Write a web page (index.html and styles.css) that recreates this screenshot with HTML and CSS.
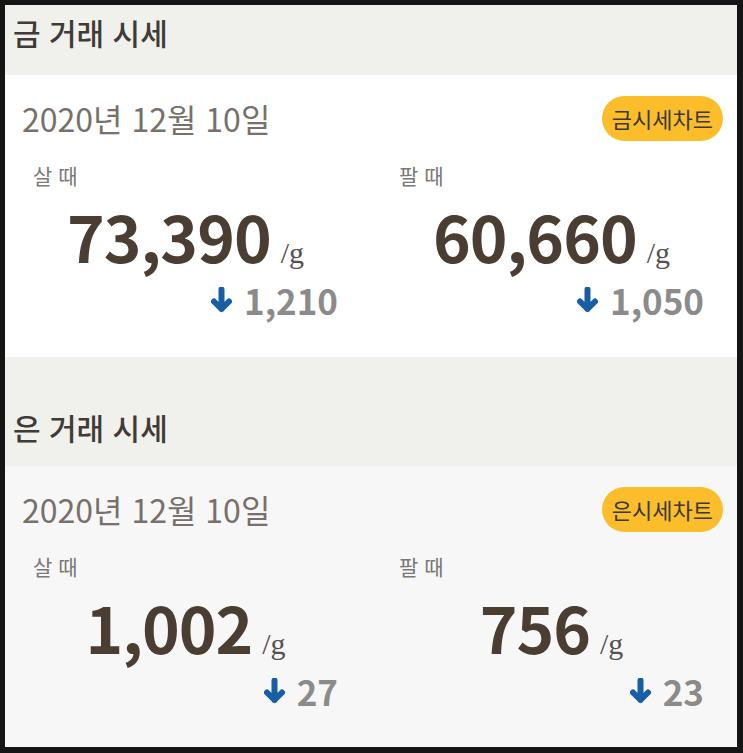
FILE: index.html
```html
<!DOCTYPE html>
<html lang="ko">
<head>
<meta charset="utf-8">
<link rel="stylesheet" href="styles.css">
</head>
<body>
<div class="frame">
  <div class="wrap">
    <h2 class="sec-title">금 거래 시세</h2>
    <section class="card card-gold">
      <div class="card-top">
        <div class="date">2020년 12월 10일</div>
        <a class="badge">금시세차트</a>
      </div>
      <div class="cols">
        <div class="col">
          <div class="label">살 때</div>
          <div class="price"><span class="num">73,390</span><span class="unit">/g</span></div>
          <div class="change"><svg class="arrow" viewBox="0 0 21 26"><path d="M10.5 2.5 V22 M3 14.5 L10.5 22 L18 14.5" /></svg><span>1,210</span></div>
        </div>
        <div class="col">
          <div class="label">팔 때</div>
          <div class="price"><span class="num">60,660</span><span class="unit">/g</span></div>
          <div class="change"><svg class="arrow" viewBox="0 0 21 26"><path d="M10.5 2.5 V22 M3 14.5 L10.5 22 L18 14.5" /></svg><span>1,050</span></div>
        </div>
      </div>
    </section>
    <h2 class="sec-title sec-second">은 거래 시세</h2>
    <section class="card card-silver">
      <div class="card-top">
        <div class="date">2020년 12월 10일</div>
        <a class="badge">은시세차트</a>
      </div>
      <div class="cols">
        <div class="col">
          <div class="label">살 때</div>
          <div class="price"><span class="num">1,002</span><span class="unit">/g</span></div>
          <div class="change"><svg class="arrow" viewBox="0 0 21 26"><path d="M10.5 2.5 V22 M3 14.5 L10.5 22 L18 14.5" /></svg><span>27</span></div>
        </div>
        <div class="col">
          <div class="label">팔 때</div>
          <div class="price"><span class="num">756</span><span class="unit">/g</span></div>
          <div class="change"><svg class="arrow" viewBox="0 0 21 26"><path d="M10.5 2.5 V22 M3 14.5 L10.5 22 L18 14.5" /></svg><span>23</span></div>
        </div>
      </div>
    </section>
  </div>
</div>
</body>
</html>
```

FILE: styles.css
```css
html, body {
  margin: 0;
  padding: 0;
  background: #151515;
}
body {
  font-family: "Noto Sans CJK KR", "Noto Sans", sans-serif;
}
.frame {
  padding: 5px 6px 6px 5px;
  height: 753px;
  box-sizing: border-box;
}
.wrap {
  background: #f0f0ec;
  height: 100%;
  display: flex;
  flex-direction: column;
}
.sec-title {
  margin: 0;
  height: 70px;
  box-sizing: border-box;
  padding: 9px 0 0 8px;
  font-size: 30px;
  line-height: 36px;
  font-weight: 500;
  color: #3f3b37;
}
.sec-second {
  margin-top: 43px;
  height: 66px;
}
.card {
  background: #ffffff;
  height: 282px;
  box-sizing: border-box;
  padding-top: 21px;
}
.card-silver {
  background: #f7f7f7;
  flex: 1;
  height: auto;
}
.card-top {
  display: flex;
  justify-content: space-between;
  align-items: center;
  padding: 0 14px 0 17px;
}
.date {
  font-size: 32px;
  line-height: 45px;
  color: #77706b;
  font-weight: 400;
}
.badge {
  display: block;
  height: 45px;
  line-height: 45px;
  padding: 0 10px;
  border-radius: 23px;
  background: #fbbd29;
  color: #3b3a31;
  font-size: 22px;
}
.cols {
  display: grid;
  grid-template-columns: 1fr 1fr;
}
.col {
  display: flex;
  flex-direction: column;
  padding: 0 33px 0 28px;
}
.label {
  margin-top: 21px;
  font-size: 21px;
  line-height: 26px;
  color: #7a7878;
}
.price {
  display: flex;
  justify-content: center;
  align-items: baseline;
  margin-top: 15px;
  height: 64px;
}
.num {
  font-size: 64px;
  line-height: 64px;
  font-weight: 700;
  color: #4a3d31;
  letter-spacing: -1px;
}
.unit {
  font-family: "Liberation Serif", serif;
  font-size: 30px;
  line-height: 30px;
  color: #555150;
  margin-left: 10px;
}
.change {
  display: flex;
  justify-content: flex-end;
  align-items: center;
  gap: 12px;
  margin-top: 11px;
  font-size: 35px;
  line-height: 44px;
  font-weight: 700;
  color: #8b8b8b;
}
.arrow {
  width: 21px;
  height: 26px;
  fill: none;
  stroke: #175ea4;
  stroke-width: 6;
  stroke-linejoin: round;
  stroke-linecap: round;
}
```
